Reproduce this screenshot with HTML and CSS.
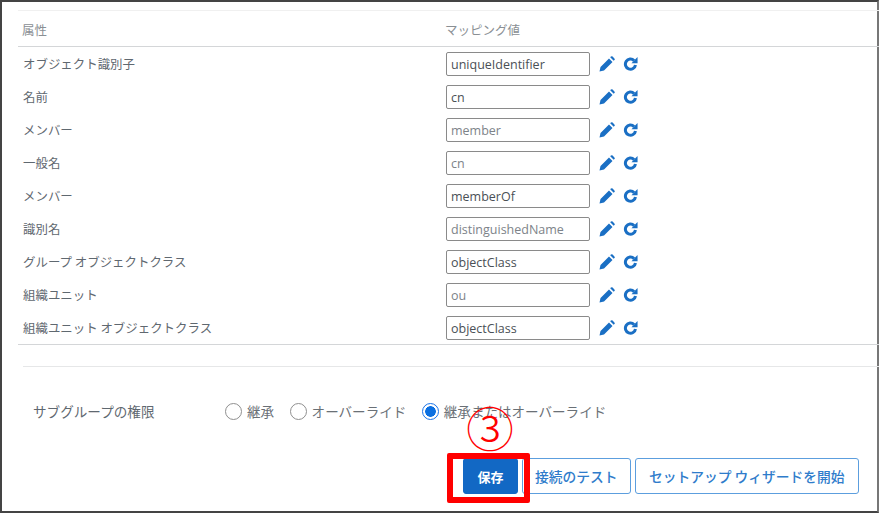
FILE: index.html
```html
<!DOCTYPE html>
<html lang="ja">
<head>
<meta charset="utf-8">
<title>属性マッピング</title>
<link rel="stylesheet" href="styles.css">
</head>
<body>
<div class="frame">
  <section class="table">
    <div class="row head"><div class="name">属性</div><div class="value">マッピング値</div></div>
    <div class="row"><div class="name">オブジェクト識別子</div><div class="value"><input class="field set" value="uniqueIdentifier"><svg class="icon" viewBox="0 0 16 16"><use href="#pen"/></svg><svg class="icon redo" viewBox="0 0 16 16"><use href="#redo"/></svg></div></div>
    <div class="row"><div class="name">名前</div><div class="value"><input class="field set" value="cn"><svg class="icon" viewBox="0 0 16 16"><use href="#pen"/></svg><svg class="icon redo" viewBox="0 0 16 16"><use href="#redo"/></svg></div></div>
    <div class="row"><div class="name">メンバー</div><div class="value"><input class="field" value="member"><svg class="icon" viewBox="0 0 16 16"><use href="#pen"/></svg><svg class="icon redo" viewBox="0 0 16 16"><use href="#redo"/></svg></div></div>
    <div class="row"><div class="name">一般名</div><div class="value"><input class="field" value="cn"><svg class="icon" viewBox="0 0 16 16"><use href="#pen"/></svg><svg class="icon redo" viewBox="0 0 16 16"><use href="#redo"/></svg></div></div>
    <div class="row"><div class="name">メンバー</div><div class="value"><input class="field set" value="memberOf"><svg class="icon" viewBox="0 0 16 16"><use href="#pen"/></svg><svg class="icon redo" viewBox="0 0 16 16"><use href="#redo"/></svg></div></div>
    <div class="row"><div class="name">識別名</div><div class="value"><input class="field" value="distinguishedName"><svg class="icon" viewBox="0 0 16 16"><use href="#pen"/></svg><svg class="icon redo" viewBox="0 0 16 16"><use href="#redo"/></svg></div></div>
    <div class="row"><div class="name">グループ オブジェクトクラス</div><div class="value"><input class="field set" value="objectClass"><svg class="icon" viewBox="0 0 16 16"><use href="#pen"/></svg><svg class="icon redo" viewBox="0 0 16 16"><use href="#redo"/></svg></div></div>
    <div class="row"><div class="name">組織ユニット</div><div class="value"><input class="field" value="ou"><svg class="icon" viewBox="0 0 16 16"><use href="#pen"/></svg><svg class="icon redo" viewBox="0 0 16 16"><use href="#redo"/></svg></div></div>
    <div class="row"><div class="name">組織ユニット オブジェクトクラス</div><div class="value"><input class="field set" value="objectClass"><svg class="icon" viewBox="0 0 16 16"><use href="#pen"/></svg><svg class="icon redo" viewBox="0 0 16 16"><use href="#redo"/></svg></div></div>
  </section>
  <div class="rule"></div>
  <div class="perm">
    <div class="perm-label">サブグループの権限</div>
    <div class="radios">
      <span class="radio"><i class="dot"></i>継承</span>
      <span class="radio"><i class="dot"></i>オーバーライド</span>
      <span class="radio"><i class="dot on"></i>継承またはオーバーライド</span>
    </div>
  </div>
  <div class="actions">
    <button class="btn primary">保存</button>
    <button class="btn test">接続のテスト</button>
    <button class="btn wizard">セットアップ ウィザードを開始</button>
  </div>
  <div class="mark-num">③</div>
  <div class="mark-box"></div>
</div>
<svg class="defs" aria-hidden="true">
  <symbol id="pen" viewBox="0 0 16 16"><path d="M0.500 15.500l1-4.500L10 2.500l3.500 3.500L5 14.500z M11.200 1.300l0.700-0.700a1.200 1.200 0 0 1 1.700 0l1.800 1.800a1.200 1.200 0 0 1 0 1.700l-0.700 0.700z"/></symbol>
  <symbol id="redo" viewBox="0 0 16 16"><path class="arc" d="M11.800 4.900A5.400 5.400 0 1 0 13.300 9.500"/><path d="M9 7.600H15.500V1.100z"/></symbol>
</svg>
</body>
</html>
```
FILE: styles.css
```css
* { box-sizing: border-box; }
html, body { margin: 0; padding: 0; background: #fff; }
body { width: 879px; height: 513px; overflow: hidden; font-family: "Noto Sans CJK JP", "Noto Sans", sans-serif; color: #5f6870; }
.frame { position: relative; width: 879px; height: 513px; border: 2px solid #444; border-right-color: #777; background: #fff; }
.table { margin: 8px 0 0 16px; width: 861px; border-top: 1px solid #f0f0f0; border-bottom: 1px solid #d4d6d8; }
.row { display: flex; align-items: center; height: 33px; }
.row .name { padding-top: 1px; }
.head { height: 36px; border-bottom: 1px solid #d4d6d8; color: #8a8f94; padding-top: 1px; }
.name { width: 428px; padding-left: 5px; font-size: 12.45px; }
.head .name { padding-left: 4px; font-size: 12.5px; }
.head .value { margin-left: -1px; font-size: 12.5px; }
.value { display: flex; align-items: center; }
.field { width: 144px; height: 24px; margin: 0; padding: 1px 4px 0; border: 1px solid #8a8a8a; border-radius: 2px; font: 12.5px "Open Sans", "Noto Sans", sans-serif; color: #7d8389; background: #fff; outline: none; }
.field.set { color: #4a5056; }
.icon { width: 16px; height: 16px; margin-left: 9px; fill: #1a6fc4; flex: none; }
.icon.redo { margin-left: 8px; width: 15px; height: 15px; }
.arc { fill: none; stroke: #1a6fc4; stroke-width: 3.2; }
.defs { position: absolute; width: 0; height: 0; }
.rule { margin: 21px 0 0 21px; width: 856px; border-top: 1px solid #e6e7e8; }
.perm { display: flex; align-items: center; margin-top: 34px; height: 20px; }
.perm-label { width: 223px; padding-left: 31px; font-size: 13.6px; }
.radios { display: flex; gap: 15.500px; }
.radio { display: flex; align-items: center; gap: 5px; font-size: 13.550px; white-space: nowrap; color: #6a7076; }
.dot { width: 17px; height: 17px; border: 1px solid #8f8f8f; border-radius: 50%; background: #fff; }
.dot.on { border-color: #1a73e8; background: radial-gradient(circle, #0b6fe0 0 5px, #fff 5.6px); }
.actions { display: flex; gap: 4px; margin: 37px 0 0 461px; height: 36px; }
.btn { height: 36px; padding: 0 13px; border: 1px solid #5c9ede; border-radius: 3px; background: #fff; color: #2f7ccb; font: 500 13.75px "Noto Sans CJK JP", sans-serif; white-space: nowrap; }
.btn.test { padding: 0 12px; }
.btn.wizard { padding: 0 13.500px; }
.btn.primary { width: 55px; padding: 0; background: #1268c4; border-color: #1268c4; color: #fff; font-size: 13px; font-weight: 700; }
.mark-box { position: absolute; left: 445px; top: 451px; width: 83px; height: 50px; border: 6px solid #f00; border-radius: 2px; }
.mark-num { position: absolute; left: 462px; top: 397px; width: 52px; height: 54px; line-height: 54px; text-align: center; font-size: 48px; font-weight: 300; color: #f00; font-family: "Noto Sans CJK JP", sans-serif; }
```
